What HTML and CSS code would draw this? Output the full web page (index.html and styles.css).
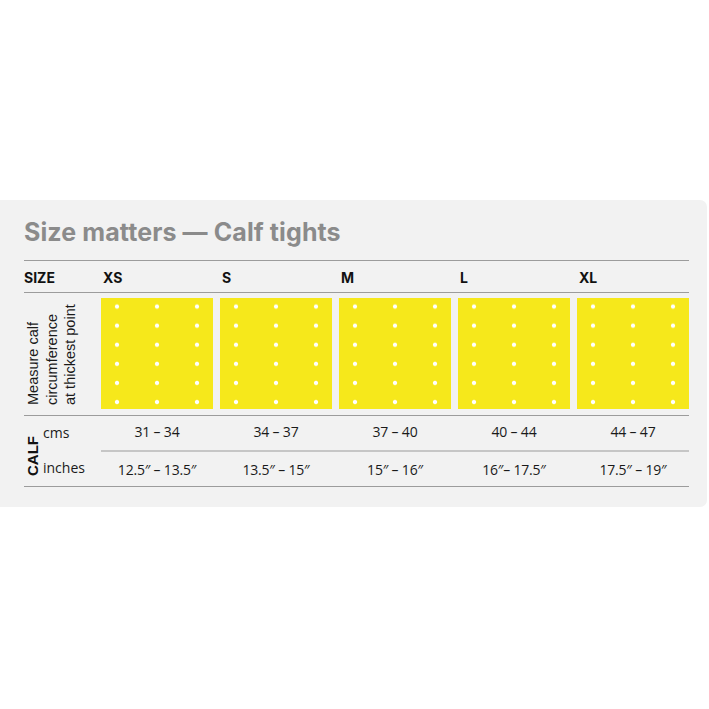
FILE: index.html
```html
<!DOCTYPE html>
<html>
<head>
<meta charset="utf-8">
<link rel="stylesheet" href="styles.css">
</head>
<body>
<div class="panel">
  <h1 class="title">Size matters — Calf tights</h1>
  <div class="table">
    <div class="row head">
      <div>SIZE</div><div>XS</div><div>S</div><div>M</div><div>L</div><div>XL</div>
    </div>
    <div class="row boxes">
      <div class="vlabel">Measure calf<br>circumference<br>at thickest point</div>
      <div class="box"></div><div class="box"></div><div class="box"></div><div class="box"></div><div class="box"></div>
    </div>
    <div class="calf">
      <div class="calf-label">
        <div class="calf-word">CALF</div>
        <div class="units"><div class="unit">cms</div><div class="unit">inches</div></div>
      </div>
      <div class="values">
        <div class="vrow cm">
          <div>31 – 34</div><div>34 – 37</div><div>37 – 40</div><div>40 – 44</div><div>44 – 47</div>
        </div>
        <div class="vrow">
          <div>12.5″ – 13.5″</div><div>13.5″ – 15″</div><div>15″ – 16″</div><div>16″– 17.5″</div><div>17.5″ – 19″</div>
        </div>
      </div>
    </div>
  </div>
</div>
</body>
</html>
```
FILE: styles.css
```css
html, body { margin: 0; padding: 0; background: #fff; }
body { font-family: "Liberation Sans", Arial, sans-serif; color: #1a1a1a; }

.panel {
  margin-top: 200px;
  width: 707px;
  height: 307px;
  box-sizing: border-box;
  background: #f2f2f2;
  border-radius: 0 7px 7px 0;
  padding: 17px 0 0 24px;
}

.title {
  margin: 0;
  font-family: Inter, "Liberation Sans", sans-serif;
  font-weight: 700;
  font-size: 25px;
  line-height: 30px;
  color: #8b8b8b;
  letter-spacing: 0.1px;
}

.table { width: 665px; margin-top: 13px; }

.row {
  display: grid;
  grid-template-columns: 70px repeat(5, 112px);
  column-gap: 7px;
}

.head {
  border-top: 1px solid #9c9c9c;
  border-bottom: 1px solid #9c9c9c;
  height: 31px;
  align-items: center;
  font-family: Inter, "Liberation Sans", sans-serif;
  font-weight: 700;
  font-size: 14px;
  color: #111;
}
.head > div { padding-top: 1px; }
.head > div:not(:first-child) { padding-left: 2px; }

.boxes {
  padding: 5px 0 6px;
  border-bottom: 1px solid #9c9c9c;
}

.vlabel {
  writing-mode: vertical-rl;
  transform: rotate(180deg);
  font-family: "Liberation Sans", Arial, sans-serif;
  font-size: 14.5px;
  line-height: 18.5px;
  color: #1a1a1a;
  justify-self: start;
  text-align: start;
  align-self: stretch;
  padding-top: 4px;
}

.box {
  height: 111px;
  background-color: #f6e81b;
  background-image: radial-gradient(circle, #ffffff 0, #ffffff 1.6px, rgba(255,255,255,0) 2.6px);
  background-size: 40px 19.1px;
  background-position: -4px -1px;
}

.calf {
  display: grid;
  grid-template-columns: 77px 588px;
  border-bottom: 1px solid #9c9c9c;
}

.calf-label { display: flex; align-items: center; }
.calf-word {
  writing-mode: vertical-rl;
  transform: rotate(180deg);
  font-weight: 700;
  font-size: 15px;
  color: #111;
  width: 19px;
  margin-top: 10px;
}
.units {
  display: flex;
  flex-direction: column;
  font-family: "Open Sans", sans-serif;
  font-size: 14px;
  color: #1a1a1a;
}
.unit { height: 34px; line-height: 34px; }
.unit:first-child { line-height: 31px; }

.vrow {
  display: grid;
  grid-template-columns: repeat(5, 112px);
  column-gap: 7px;
  height: 34px;
  align-items: center;
  text-align: center;
  font-family: "Open Sans", sans-serif;
  font-size: 14px;
  color: #1a1a1a;
  letter-spacing: -0.2px;
}
.vrow.cm { height: 34px; border-bottom: 2px solid #c6c6c6; }
.vrow.cm > div { padding-bottom: 4px; }
```
